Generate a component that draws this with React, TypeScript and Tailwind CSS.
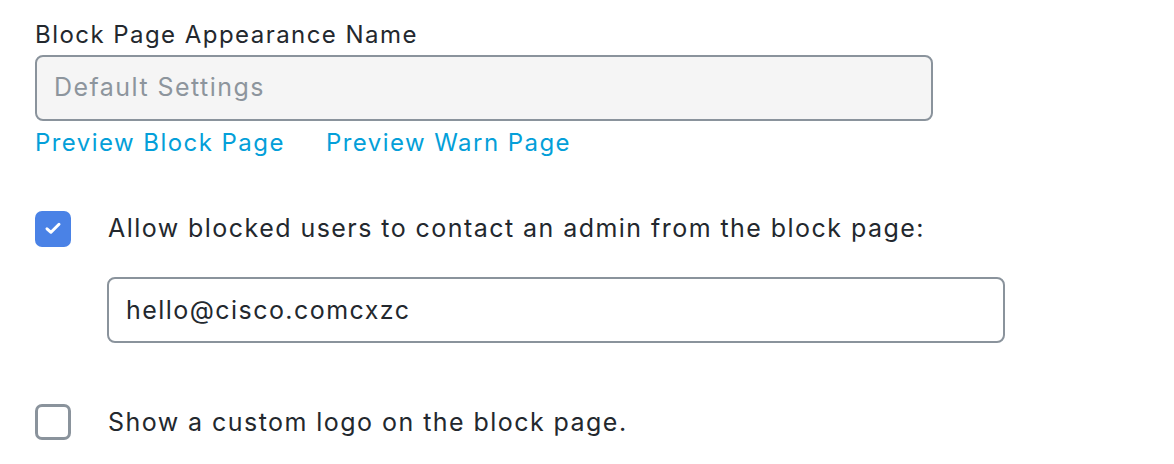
import { useState } from 'react';

function Check({ on, toggle }: { on: boolean; toggle: () => void }) {
  return (
    <button
      onClick={toggle}
      className={
        on
          ? 'flex h-[36px] w-[36px] shrink-0 items-center justify-center rounded-[7px] bg-[#4a82e6]'
          : 'h-[36px] w-[36px] shrink-0 rounded-[7px] border-[3px] border-[#8a939c] bg-white'
      }
    >
      {on && (
        <svg width="18" height="15" viewBox="0 0 18 15" fill="none">
          <path d="M3 7.8L7 11.3L15 3.3" stroke="white" strokeWidth="3" strokeLinecap="round" strokeLinejoin="round" />
        </svg>
      )}
    </button>
  );
}

export default function App() {
  const [allowContact, setAllowContact] = useState(true);
  const [showLogo, setShowLogo] = useState(false);
  const [email, setEmail] = useState('hello@cisco.comcxzc');

  return (
    <div className="min-h-screen bg-white px-[35px] pt-[20px] text-[#23282e] text-[25px] tracking-[1.45px] font-['Inter','Liberation_Sans',sans-serif]">
      <label className="block text-[24px] leading-[30px]">Block Page Appearance Name</label>
      <div className="mt-[5px] flex h-[66px] w-[898px] items-center rounded-[8px] border-2 border-[#8a939c] bg-[#f5f5f5] px-[17px] text-[#8d959d]">
        Default Settings
      </div>
      <div className="mt-[4px] flex gap-[41px] text-[24px] leading-[36px] text-[#049fd9]">
        <a href="#" className="hover:underline">Preview Block Page</a>
        <a href="#" className="hover:underline">Preview Warn Page</a>
      </div>

      <div className="mt-[49px] flex items-center">
        <Check on={allowContact} toggle={() => setAllowContact(!allowContact)} />
        <span className="ml-[37px]">Allow blocked users to contact an admin from the block page:</span>
      </div>

      <input
        value={email}
        onChange={(e) => setEmail(e.target.value)}
        className="mt-[29px] ml-[72px] block h-[66px] w-[898px] rounded-[8px] border-2 border-[#8a939c] bg-white px-[17px] text-[#23282e] outline-none"
      />

      <div className="mt-[61px] flex items-center">
        <Check on={showLogo} toggle={() => setShowLogo(!showLogo)} />
        <span className="ml-[37px]">Show a custom logo on the block page.</span>
      </div>
    </div>
  );
}
